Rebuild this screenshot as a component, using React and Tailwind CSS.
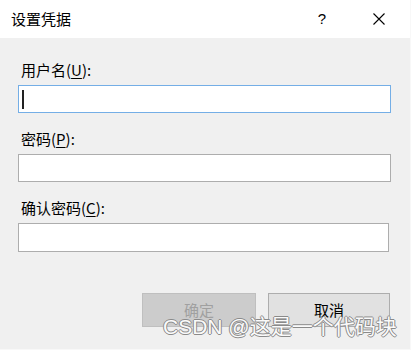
export default function App() {
  const font = "font-['Noto_Sans_CJK_SC','Microsoft_YaHei',sans-serif]";
  return (
    <div className={`relative w-[411px] h-[350px] bg-[#f0f0f0] overflow-hidden border-r border-b border-[#f8f8f8] ${font}`}>
      <div className="h-[38px] bg-white flex items-center pl-[11px] pr-[25px]">
        <span className="text-[15px] leading-[20px] text-black">设置凭据</span>
        <span className="ml-auto w-[14px] text-center text-[15px] leading-[20px] text-black font-['Liberation_Sans',sans-serif]">?</span>
        <svg className="ml-[44px]" width="12" height="12" viewBox="0 0 12 12">
          <path d="M0.5 0.5 L11.5 11.5 M11.5 0.5 L0.5 11.5" stroke="#000" strokeWidth="1.1" fill="none" />
        </svg>
      </div>

      <div className="pl-[18px] pt-[22px] pr-[20px]">
        <div className="h-[20px] pl-[3px] text-[15px] leading-[20px] text-black">
          用户名(<span className="underline underline-offset-2">U</span>):
        </div>
        <div className="mt-[5px] w-[373px] h-[28px] bg-white border border-[#74aee6] flex items-center pl-[3px]">
          <div className="w-[2px] h-[19px] bg-[#222]" />
        </div>

        <div className="mt-[16px] h-[20px] pl-[3px] text-[15px] leading-[20px] text-black">
          密码(<span className="underline underline-offset-2">P</span>):
        </div>
        <div className="mt-[5px] w-[373px] h-[28px] bg-white border border-[#adadad]" />

        <div className="mt-[16px] h-[20px] pl-[3px] text-[15px] leading-[20px] text-black">
          确认密码(<span className="underline underline-offset-2">C</span>):
        </div>
        <div className="mt-[5px] w-[371px] h-[29px] bg-white border border-[#adadad]" />

        <div className="mt-[41px] flex justify-end gap-[12px]">
          <div className="w-[114px] h-[34px] bg-[#cccccc] border border-[#bfbfbf] flex items-center justify-center text-[15px] leading-[20px] text-[#a0a0a0]">
            确定
          </div>
          <div className="w-[122px] h-[34px] bg-[#e1e1e1] border border-[#adadad] flex items-center justify-center text-[15px] leading-[20px] text-black">
            取消
          </div>
        </div>
      </div>

      <div className="absolute left-[163px] top-[315px] text-[21px] leading-[24px] whitespace-nowrap text-[#fafafa] font-['Liberation_Sans','Noto_Sans_CJK_SC',sans-serif] [text-shadow:-1px_0_#8a8a8a,1px_0_#8a8a8a,0_-1px_#8a8a8a,0_1px_#8a8a8a]">
        CSDN @这是一个代码块
      </div>
    </div>
  );
}
